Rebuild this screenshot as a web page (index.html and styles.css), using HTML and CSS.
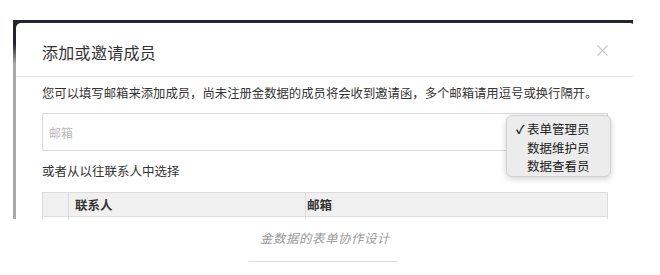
FILE: index.html
```
<!DOCTYPE html>
<html lang="zh-CN">
<head>
<meta charset="utf-8">
<link rel="stylesheet" href="styles.css">
</head>
<body>
<div class="page">
  <div class="shot">
    <div class="modal">
      <div class="modal-header">
        <span class="title">添加或邀请成员</span>
        <svg class="close" width="11" height="11" viewBox="0 0 11 11"><path d="M0.5 0.5 L10.5 10.5 M10.5 0.5 L0.5 10.5" stroke="#c8c8c8" stroke-width="1.1" fill="none"/></svg>
      </div>
      <div class="modal-body">
        <p class="desc">您可以填写邮箱来添加成员，尚未注册金数据的成员将会收到邀请函，多个邮箱请用逗号或换行隔开。</p>
        <div class="input"><span class="placeholder">邮箱</span></div>
        <p class="sub">或者从以往联系人中选择</p>
        <div class="table">
          <div class="row head">
            <div class="cell c1"></div>
            <div class="cell c2">联系人</div>
            <div class="cell c3">邮箱</div>
          </div>
          <div class="row body">
            <div class="cell c1"></div>
            <div class="cell c2"></div>
            <div class="cell c3"></div>
          </div>
        </div>
      </div>
      <div class="menu">
        <div class="item"><span class="check">✓</span>表单管理员</div>
        <div class="item"><span class="check"></span>数据维护员</div>
        <div class="item"><span class="check"></span>数据查看员</div>
      </div>
    </div>
  </div>
  <p class="caption">金数据的表单协作设计</p>
  <div class="rule"></div>
</div>
</body>
</html>
```
FILE: styles.css
```
* { box-sizing: border-box; }
html, body { margin: 0; padding: 0; background: #fff; }
body { font-family: "PingFang SC", "Noto Sans CJK SC", "Noto Sans", sans-serif; color: #333; }
.page { width: 660px; height: 275px; overflow: hidden; padding-top: 20px; }
.shot {
  margin-left: 13px;
  width: 620px;
  height: 199px;
  overflow: hidden;
  background: linear-gradient(to bottom, #23262e 0, #23262e 24px, #6a6a6a 34px, #a8a8a8 44px, #a8a8a8 100%);
  padding: 3px 0 0 3px;
}
.modal {
  position: relative;
  width: 619px;
  height: 200px;
  background: #fff;
  border-radius: 5px 5px 0 0;
}
.modal-header {
  height: 54px;
  padding: 4px 23px 0 26px;
  display: flex;
  align-items: center;
  justify-content: space-between;
  border-bottom: 1px solid #e6e6e6;
}
.title { font-size: 16px; color: #333; letter-spacing: 0.3px; }
.close { display: block; margin-right: 4px; margin-top: -2px; }
.modal-body { padding: 0 10px 0 26px; }
.desc { margin: 7px 0 0; font-size: 12.35px; line-height: 18px; color: #333; white-space: nowrap; }
.input {
  margin-top: 11px;
  width: 566px;
  height: 38px;
  border: 1px solid #dcdcdc;
  padding-left: 6px;
  display: flex;
  align-items: center;
}
.placeholder { font-size: 12px; color: #b8b8b8; }
.sub { margin: 11px 0 0; font-size: 12.5px; line-height: 18px; color: #333; }
.table { margin-top: 12px; width: 566px; border: 1px solid #dcdcdc; border-bottom: 0; }
.row { display: flex; }
.row.head { height: 24px; background: #f0f0f0; border-bottom: 1px solid #dcdcdc; }
.row.body { height: 20px; }
.cell { font-size: 12.5px; font-weight: bold; color: #333; display: flex; align-items: center; padding-left: 6px; }
.c1 { width: 26px; border-right: 1px solid #dcdcdc; }
.c2 { width: 237px; border-right: 1px solid #dcdcdc; }
.c3 { flex: 1; padding-left: 1px; }
.menu {
  position: absolute;
  left: 490px;
  top: 92px;
  width: 105px;
  height: 62px;
  background: #ececec;
  border: 1px solid #d2d2d2;
  border-radius: 6px;
  box-shadow: 0 2px 6px rgba(0, 0, 0, 0.18);
  padding: 4px 0 0 9px;
}
.item { font-size: 12.5px; line-height: 18.5px; color: #222; display: flex; align-items: center; }
.check { display: inline-block; width: 11px; font-size: 12px; font-weight: bold; }
.caption {
  margin: 10px 0 0;
  text-align: center;
  padding-right: 10px;
  font-size: 12.5px;
  line-height: 18px;
  font-style: italic;
  color: #9a9a9a;
  letter-spacing: 0.5px;
}
.rule { margin: 14px 0 0 249px; width: 149px; height: 1px; background: #dcdcdc; }
```
